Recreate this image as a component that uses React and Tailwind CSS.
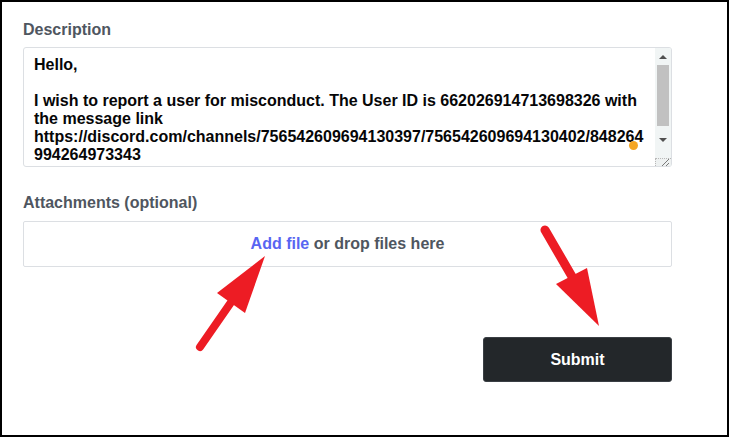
import React from 'react'

const font = { fontFamily: '"Liberation Sans", Arial, sans-serif' }

const LINES = [
  'Hello,',
  '\u00a0',
  'I wish to report a user for misconduct. The User ID is 662026914713698326 with',
  'the message link',
  'https://discord.com/channels/756542609694130397/756542609694130402/848264',
  '994264973343',
]

function Scrollbar() {
  return (
    <div className="absolute right-0 top-0 bottom-0 w-[16px] flex flex-col bg-[#f1f5f5]">
      <div className="h-[17px] flex items-center justify-center">
        <div className="w-0 h-0 border-l-[4px] border-r-[4px] border-b-[4px] border-l-transparent border-r-transparent border-b-[#505050]" />
      </div>
      <div className="mx-[2px] h-[61px] bg-[#c1c1c1]" />
      <div className="flex-1" />
      <div className="h-[17px] flex items-center justify-center">
        <div className="w-0 h-0 border-l-[4px] border-r-[4px] border-t-[4px] border-l-transparent border-r-transparent border-t-[#505050]" />
      </div>
      <div className="h-[10px]" />
      <div className="h-[8px] border-t border-l border-dotted border-[#b8b8b8] bg-[#eef1f1] relative">
        <svg width="14" height="8" className="absolute right-0 bottom-0">
          <path d="M5 8 L12 1 M9 8 L12 5" stroke="#7a7a7a" strokeWidth="1" />
        </svg>
      </div>
    </div>
  )
}

export default function App() {
  return (
    <div className="w-[730px] h-[438px] bg-white relative" style={font}>
      <div className="w-[729px] h-[437px] border-2 border-black flex flex-col pl-[21px] pt-[19px]">
        <label className="h-[18px] leading-[18px] text-[16px] font-bold text-[#4f5660]">Description</label>
        <div className="mt-[8px] w-[649px] h-[120px] border border-[#dcdfe3] rounded-[3px] relative overflow-hidden">
          <div className="pl-[10px] pt-[8px] text-[16px] leading-[18px] font-bold text-[#060607] whitespace-pre">
            {LINES.map((l, i) => <div key={i}>{l}</div>)}
          </div>
          <span className="absolute left-[605px] top-[93px] w-[9px] h-[9px] rounded-full bg-[#f5a623]" />
          <Scrollbar />
        </div>

        <label className="mt-[27px] h-[18px] leading-[18px] text-[16px] font-bold text-[#4f5660]">Attachments (optional)</label>
        <div className="mt-[9px] w-[649px] h-[46px] border border-[#dcdfe3] rounded-[2px] flex items-center justify-center text-[16px] font-bold">
          <span className="text-[#5865f2]">Add file</span>
          <span className="text-[#4f5660]">&nbsp;or drop files here</span>
        </div>

        <div className="w-[649px] flex justify-end mt-[70px]">
          <button className="w-[189px] h-[45px] bg-[#23272a] border border-[#3a3f44] rounded-[3px] text-white text-[16px] font-bold">
            Submit
          </button>
        </div>
      </div>

      <svg className="absolute inset-0 pointer-events-none" width="730" height="438" viewBox="0 0 730 438">
        <line x1="200" y1="347" x2="234" y2="298" stroke="#ed1c24" strokeWidth="8" strokeLinecap="round" />
        <polygon points="265,256 217,293 245,313" fill="#ed1c24" />
        <line x1="545" y1="230" x2="574" y2="280" stroke="#ed1c24" strokeWidth="9" strokeLinecap="round" />
        <polygon points="599,326 556,284 587,268" fill="#ed1c24" />
      </svg>
    </div>
  )
}
